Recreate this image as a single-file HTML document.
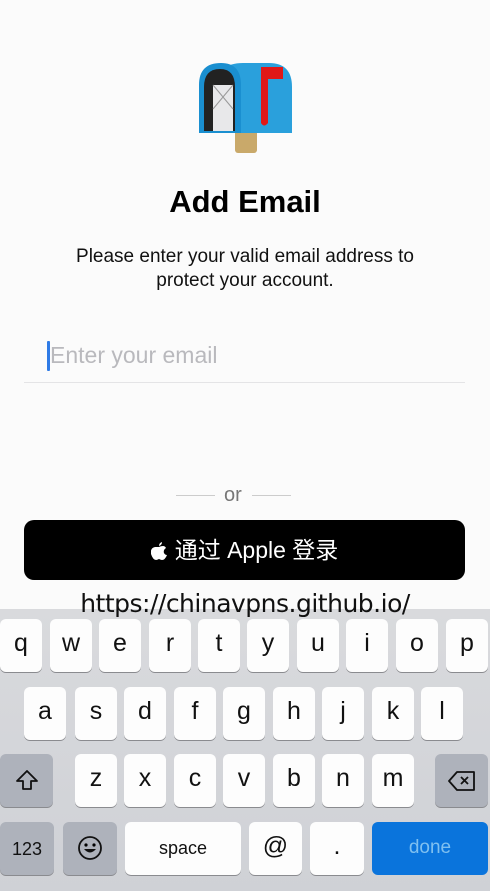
<!DOCTYPE html>
<html><head><meta charset="utf-8"><style>
*{margin:0;padding:0;box-sizing:border-box}
body{width:490px;height:891px;overflow:hidden;background:#fbfbfb;font-family:"Liberation Sans","Noto Sans CJK SC",sans-serif;position:relative;color:#000}
.a{position:absolute}
.k{position:absolute;width:42px;height:53px;background:#fdfdfd;border-radius:6px;box-shadow:0 1px 0 #8a8b8f;font-size:25px;text-align:center;line-height:48px;color:#111}
.g{background:#aeb2bb}
</style></head><body>
<svg class="a" style="left:195px;top:55px" width="100" height="100" viewBox="0 0 100 100">
<rect x="40" y="72" width="22" height="26" rx="3" fill="#c9a96a"/><rect x="40" y="72" width="22" height="5" fill="#8f7546"/>
<path d="M22 78 V32 Q22 8 48 8 H74 Q97 8 97 32 V78 Z" fill="#2aa0dc"/>
<path d="M4 78 V30 Q4 8 26 8 Q46 8 46 30 V78 Z" fill="#1a8fd0"/>
<path d="M9 76 V32 Q9 14 25 14 Q40 14 40 32 V76 Z" fill="#222"/>
<rect x="18" y="30" width="20" height="46" fill="#e8e8ea"/>
<path d="M18 30 L38 54 M38 30 L18 54" stroke="#999" stroke-width="1"/>
<path d="M66 12 H88 V24 H73 V68 Q69 73 66 68 Z" fill="#e01818"/>
</svg>
<div class="a" style="left:0;width:490px;top:184px;text-align:center;font-size:31px;font-weight:bold">Add Email</div>
<div class="a" style="left:0;width:490px;top:245px;text-align:center;font-size:19px;line-height:24px;color:#111">Please enter your valid email address to<br>protect your account.</div>
<div class="a" style="left:47px;top:341px;width:3px;height:30px;background:#2f7be6;border-radius:1px"></div>
<div class="a" style="left:50px;top:342px;font-size:23px;color:#b9b9bd">Enter your email</div>
<div class="a" style="left:24px;top:382px;width:441px;height:1px;background:#e4e4e6"></div>
<div class="a" style="left:176px;top:495px;width:39px;height:1px;background:#ccc"></div>
<div class="a" style="left:252px;top:495px;width:39px;height:1px;background:#ccc"></div>
<div class="a" style="left:224px;top:484px;font-size:20px;color:#777">or</div>
<div class="a" style="left:24px;top:520px;width:441px;height:60px;background:#000;border-radius:10px;color:#fff;text-align:center;font-size:23px;line-height:60px"><svg width="16" height="18" viewBox="0 0 16 18" style="vertical-align:-2px;margin-right:8px"><path d="M11 0 Q11 3 8 4 Q8 1 11 0Z M8 5 Q10 4 12 4 Q14 4 15 6 Q12 8 13 11 Q14 13 16 13 Q14 18 11 18 Q10 18 8 17 Q6 18 5 18 Q2 18 0 12 Q-1 6 4 5 Q6 5 8 5Z" fill="#fff"/></svg>通过 Apple 登录</div>
<div class="a" style="left:0;top:609px;width:490px;height:282px;background:linear-gradient(#d9dadd,#cfd1d6)"></div>
<div class="a" style="left:0;width:490px;top:589px;text-align:center;font-size:25px;color:#111;font-family:'DejaVu Sans',sans-serif;letter-spacing:-0.5px">https://chinavpns.github.io/</div>
<div class="k" style="left:0;top:619px">q</div><div class="k" style="left:50px;top:619px">w</div><div class="k" style="left:99px;top:619px">e</div><div class="k" style="left:149px;top:619px">r</div><div class="k" style="left:198px;top:619px">t</div><div class="k" style="left:247px;top:619px">y</div><div class="k" style="left:297px;top:619px">u</div><div class="k" style="left:346px;top:619px">i</div><div class="k" style="left:396px;top:619px">o</div><div class="k" style="left:446px;top:619px">p</div>
<div class="k" style="left:24px;top:687px">a</div><div class="k" style="left:75px;top:687px">s</div><div class="k" style="left:124px;top:687px">d</div><div class="k" style="left:174px;top:687px">f</div><div class="k" style="left:223px;top:687px">g</div><div class="k" style="left:273px;top:687px">h</div><div class="k" style="left:322px;top:687px">j</div><div class="k" style="left:372px;top:687px">k</div><div class="k" style="left:421px;top:687px">l</div>
<div class="k g" style="left:0;top:754px;width:53px"><svg width="24" height="22" viewBox="0 0 24 22" style="margin-top:15px"><path d="M12 2 L22 12 H16 V20 H8 V12 H2 Z" fill="none" stroke="#111" stroke-width="1.8" stroke-linejoin="round"/></svg></div>
<div class="k" style="left:75px;top:754px">z</div><div class="k" style="left:124px;top:754px">x</div><div class="k" style="left:174px;top:754px">c</div><div class="k" style="left:223px;top:754px">v</div><div class="k" style="left:273px;top:754px">b</div><div class="k" style="left:322px;top:754px">n</div><div class="k" style="left:372px;top:754px">m</div>
<div class="k g" style="left:435px;top:754px;width:53px"><svg width="28" height="20" viewBox="0 0 28 20" style="margin-top:17px"><path d="M9 1 H26 V19 H9 L1 10 Z" fill="none" stroke="#111" stroke-width="1.8" stroke-linejoin="round"/><path d="M13 6 L20 13 M20 6 L13 13" stroke="#111" stroke-width="1.8"/></svg></div>
<div class="k g" style="left:0;top:822px;width:54px;font-size:18px;line-height:54px">123</div>
<div class="k g" style="left:63px;top:822px;width:54px"><svg width="26" height="26" viewBox="0 0 26 26" style="margin-top:13px"><circle cx="13" cy="13" r="11" fill="none" stroke="#111" stroke-width="1.8"/><circle cx="9" cy="10" r="1.6"/><circle cx="17" cy="10" r="1.6"/><path d="M7 14 Q13 21 19 14 Z" fill="#111"/></svg></div>
<div class="k" style="left:125px;top:822px;width:116px;font-size:18px;line-height:52px">space</div>
<div class="k" style="left:249px;top:822px;width:53px">@</div>
<div class="k" style="left:310px;top:822px;width:54px">.</div>
<div class="k" style="left:372px;top:822px;width:116px;background:#0a74dc;color:#7fc0f0;font-size:19px;line-height:52px;box-shadow:none">done</div>
</body></html>
